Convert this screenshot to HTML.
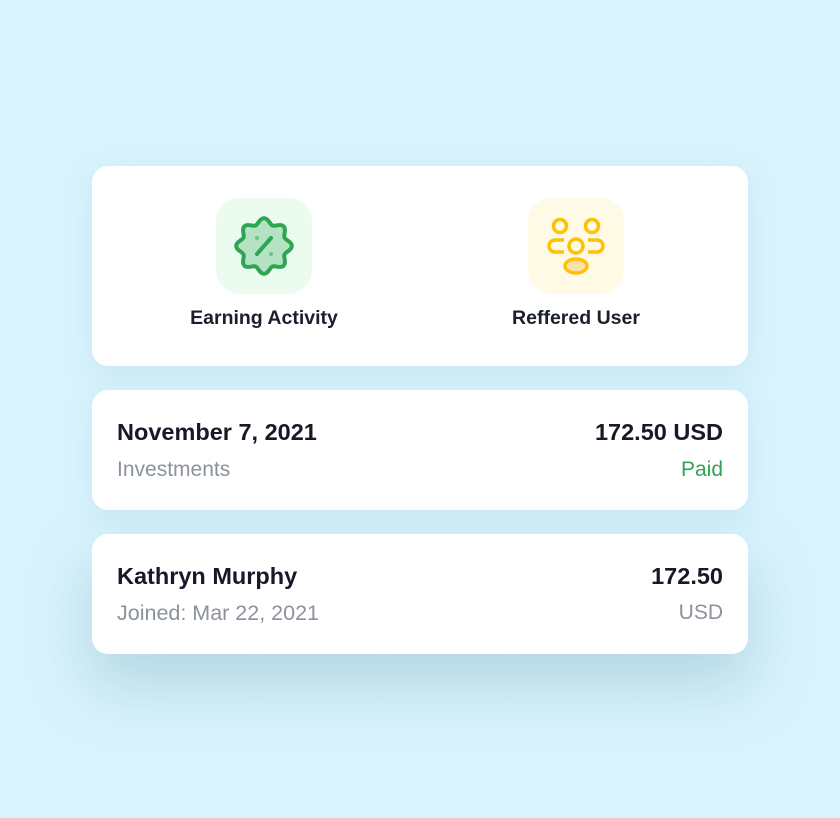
<!DOCTYPE html>
<html><head><meta charset="utf-8"><style>
html,body{margin:0;padding:0}
body{width:840px;height:818px;background:#d8f3fc;position:relative;font-family:"Liberation Sans",Roboto,sans-serif;overflow:hidden}
.card{position:absolute;left:92px;width:656px;background:#fff;border-radius:16px;box-shadow:0 10px 30px rgba(120,170,190,0.15)}
.box{position:absolute;width:96px;height:96px;border-radius:24px;top:32px}
.lbl{position:absolute;top:141px;width:240px;text-align:center;font-size:19.5px;font-weight:bold;color:#1a1f2c}
.t{position:absolute;font-size:23.5px;font-weight:bold;color:#151a26}
.s{position:absolute;font-size:21px;color:#8b929c}
</style></head><body>
<div class="card" style="top:166px;height:200px">
  <div class="box" style="left:124px;background:#ebfbf0">
    <svg width="96" height="96" viewBox="0 0 96 96">
      <path id="b" fill="#b6e2c4" stroke="#2da552" stroke-width="4" stroke-linejoin="round" d=""/>
      <line x1="41" y1="56" x2="55" y2="40" stroke="#2da552" stroke-width="4" stroke-linecap="round"/>
      <circle cx="41" cy="40" r="2" fill="#6cc487"/><circle cx="55" cy="56" r="2" fill="#6cc487"/>
    </svg>
  </div>
  <div class="lbl" style="left:52px">Earning Activity</div>
  <div class="box" style="left:436px;background:#fffae6">
    <svg width="96" height="96" viewBox="0 0 96 96" fill="none" stroke="#ffc107" stroke-width="3.5">
      <circle cx="32" cy="28" r="6.5"/><circle cx="64" cy="28" r="6.5"/>
      <circle cx="48" cy="48" r="7"/>
      <ellipse cx="48" cy="68" rx="11" ry="7" fill="#fde2b0"/>
      <path d="M36 42 H27 A6 6 0 0 0 27 54 H36"/>
      <path d="M60 42 H69 A6 6 0 0 1 69 54 H60"/>
    </svg>
  </div>
  <div class="lbl" style="left:364px">Reffered User</div>
</div>
<div class="card" style="top:390px;height:120px">
  <div class="t" style="left:25px;top:29px">November 7, 2021</div>
  <div class="s" style="left:25px;top:68px">Investments</div>
  <div class="t" style="right:25px;top:29px">172.50 USD</div>
  <div class="s" style="right:25px;top:68px;color:#2da552">Paid</div>
</div>
<div class="card" style="top:534px;height:120px;box-shadow:0 30px 60px rgba(110,160,180,0.35)">
  <div class="t" style="left:25px;top:29px">Kathryn Murphy</div>
  <div class="s" style="left:25px;top:67px;font-size:21.5px">Joined: Mar 22, 2021</div>
  <div class="t" style="right:25px;top:29px">172.50</div>
  <div class="s" style="right:25px;top:67px">USD</div>
</div>
<script>
(function(){var d="",n=16,cx=48,cy=48;for(var i=0;i<=n*8;i++){var a=i/(n*8)*2*Math.PI-Math.PI/2;var r=25+2.8*Math.cos(a*n/2*2/2*1);r=25+2.8*Math.cos(8*a);var x=cx+r*Math.cos(a),y=cy+r*Math.sin(a);d+=(i?"L":"M")+x.toFixed(2)+" "+y.toFixed(2);}document.getElementById("b").setAttribute("d",d+"Z");})();
</script>
</body></html>
